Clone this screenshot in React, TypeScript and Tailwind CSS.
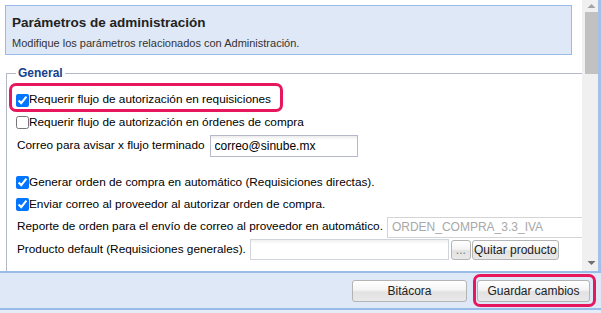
import React from 'react';

const font = "font-['Liberation_Sans',Arial,sans-serif]";

const Check = ({ checked }: { checked?: boolean }) => (
  <input type="checkbox" defaultChecked={checked} className="m-0 w-[13px] h-[13px] shrink-0" />
);

const btn =
  'border border-[#b4b4b4] rounded-[3px] bg-[linear-gradient(#ffffff,#f4f4f4_45%,#e2e2e2_55%,#e9e9e9)] text-[12px] text-[#222] leading-none flex items-center justify-center';

export default function App() {
  return (
    <div className={`${font} relative w-[601px] h-[313px] overflow-hidden bg-white text-black flex flex-col`}>
      {/* scroll area */}
      <div className="flex h-[271px]">
        <div className="w-[582px] overflow-hidden pl-[5px] pt-[5px]">
          <div className="w-[567px] h-[50px] bg-[#dfe8f6] border border-[#99bbe8] px-[6px] pt-[8px]">
            <h1 className="text-[13.5px] font-bold text-[#222] leading-[18px]">Parámetros de administración</h1>
            <p className="text-[11px] text-[#333] leading-[16px] mt-[3px]">
              Modifique los parámetros relacionados con Administración.
            </p>
          </div>

          <fieldset className="mt-[11px] ml-[1px] w-[640px] border border-[#b5b8c8] pl-[9px] pt-[9px] pb-[30px]">
            <legend className="px-[2px] text-[12px] font-bold leading-[14px] text-[#15428b]">General</legend>

            <div className="flex flex-col text-[11.8px]">
              <label className="h-[22px] flex items-center">
                <Check checked />
                <span>Requerir flujo de autorización en requisiciones</span>
              </label>
              <label className="h-[23px] flex items-center">
                <Check />
                <span>Requerir flujo de autorización en órdenes de compra</span>
              </label>
              <div className="h-[24px] flex items-center gap-[5px] pl-[1px]">
                <span>Correo para avisar x flujo terminado</span>
                <input
                  defaultValue="correo@sinube.mx"
                  className="w-[148px] h-[22px] border border-[#b5b8c8] bg-[linear-gradient(#ececec,#ffffff_4px)] px-[4px] text-[12px] outline-none"
                />
              </div>
              <div className="h-[14px]" />
              <label className="h-[21px] flex items-center">
                <Check checked />
                <span>Generar orden de compra en automático (Requisiciones directas).</span>
              </label>
              <label className="h-[23px] flex items-center">
                <Check checked />
                <span>Enviar correo al proveedor al autorizar orden de compra.</span>
              </label>
              <div className="h-[22px] flex items-center gap-[4px] pl-[1px]">
                <span>Reporte de orden para el envío de correo al proveedor en automático.</span>
                <input
                  disabled
                  defaultValue="ORDEN_COMPRA_3.3_IVA"
                  className="w-[200px] h-[21px] border border-[#d4d4d4] bg-white px-[4px] text-[12px] text-[#a8a8a8]"
                />
              </div>
              <div className="h-[23px] flex items-center pl-[1px]">
                <span>Producto default (Requisiciones generales).</span>
                <input className="ml-[4px] w-[199px] h-[21px] border border-[#d0d4dc] bg-[linear-gradient(#f0f0f0,#ffffff_4px)] outline-none" />
                <button className={`${btn} ml-[2px] w-[20px] h-[20px] text-[#777]`}>...</button>
                <button className={`${btn} ml-[1px] w-[87px] h-[20px]`}>Quitar producto</button>
              </div>
            </div>
          </fieldset>
        </div>

        {/* scrollbar */}
        <div className="w-[16px] bg-[#f0f0f0] flex flex-col items-center">
          <svg width="9" height="6" viewBox="0 0 9 6" className="mt-[3px] ml-[2px]">
            <path d="M0.5 5 L4.5 1 L8.5 5 Z" fill="#a3a3a3" />
          </svg>
          <div className="mt-[3px] ml-[2px] w-[13px] h-[62px] bg-[#c1c1c1]" />
          <div className="flex-1" />
          <svg width="9" height="6" viewBox="0 0 9 6" className="mb-[5px] ml-[2px]">
            <path d="M0.5 1 L4.5 5 L8.5 1 Z" fill="#6f6f6f" />
          </svg>
        </div>
        <div className="w-[3px] bg-[#a3c0e9]" />
      </div>

      {/* footer */}
      <div className="h-[39px] bg-[#dfe8f6] border-t-2 border-b-2 border-[#99bbe8] flex justify-end items-start pt-[7px] pr-[11px] gap-[10px]">
        <button className={`${btn} w-[115px] h-[22px]`}>Bitácora</button>
        <button className={`${btn} w-[113px] h-[22px]`}>Guardar cambios</button>
      </div>
      <div className="flex-1 bg-[#e6edf8]" />

      {/* highlight annotations */}
      <div className="absolute left-[9px] top-[83px] w-[274px] h-[29px] border-[3px] border-[#e8175d] rounded-[7px] pointer-events-none" />
      <div className="absolute left-[473px] top-[274px] w-[123px] h-[33px] border-[3px] border-[#e8175d] rounded-[7px] pointer-events-none" />
    </div>
  );
}
